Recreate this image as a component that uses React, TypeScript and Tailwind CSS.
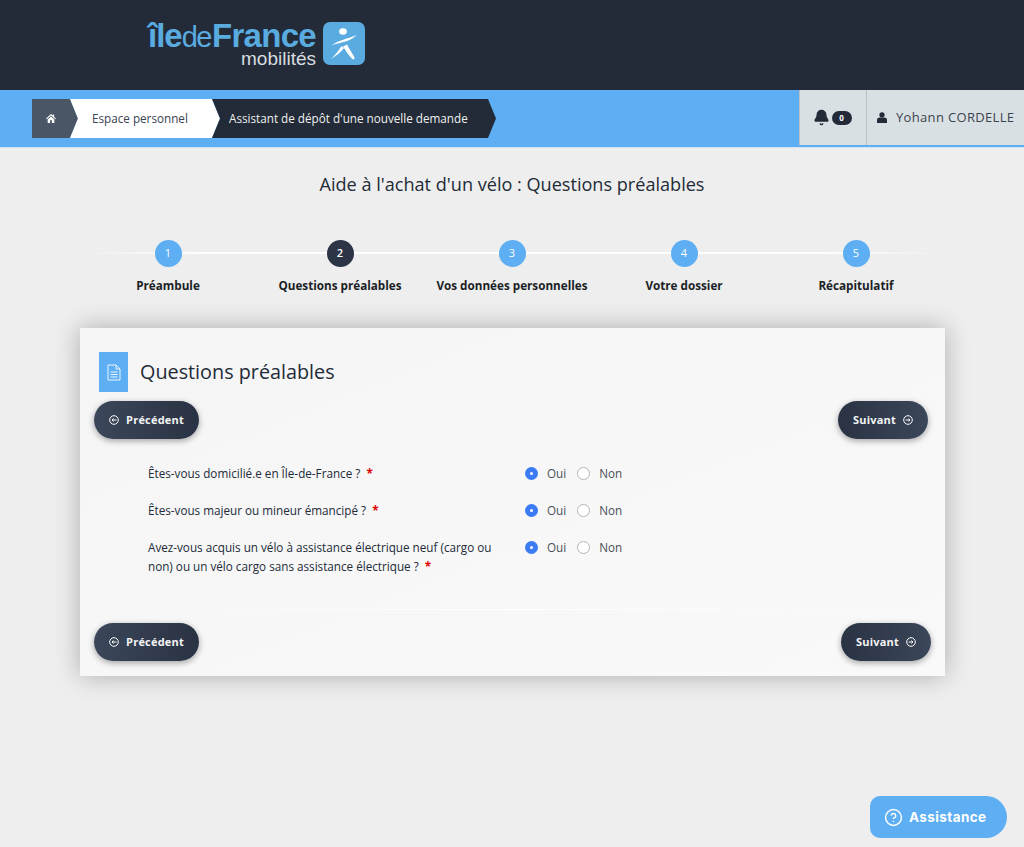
import { Bell, CircleHelp } from 'lucide-react';

const steps = [
  { n: 1, label: 'Préambule' },
  { n: 2, label: 'Questions préalables', active: true },
  { n: 3, label: 'Vos données personnelles' },
  { n: 4, label: 'Votre dossier' },
  { n: 5, label: 'Récapitulatif' },
];

const questions = [
  { text: 'Êtes-vous domicilié.e en Île-de-France ?', h: 'h-[37px]' },
  { text: 'Êtes-vous majeur ou mineur émancipé ?', h: 'h-[37px]' },
  {
    text: 'Avez-vous acquis un vélo à assistance électrique neuf (cargo ou non) ou un vélo cargo sans assistance électrique ?',
    h: 'h-[62px]',
  },
];

function Logo() {
  return (
    <div className="flex items-start gap-[7px]">
      <div className="flex flex-col items-end w-[169px] -mt-[2px]">
        <div className="flex items-baseline h-[33px] leading-[33px] text-[#5aabe0] font-['Liberation_Sans',sans-serif]">
          <span className="text-[33px] font-bold tracking-[-1px]">île</span>
          <span className="text-[29px] tracking-[-1.5px] mr-[1px]">de</span>
          <span className="text-[33px] font-bold tracking-[-0.7px]">France</span>
        </div>
        <div className="text-[19px] leading-[19px] -mt-[3px] text-[#d9dde0] font-['Liberation_Sans',sans-serif]">
          mobilités
        </div>
      </div>
      <svg width="42" height="43" viewBox="0 0 42 43" className="mt-[1px]">
        <rect width="42" height="43" rx="7" fill="#5aabe0" />
        <ellipse cx="20" cy="9.500" rx="3.800" ry="3.300" fill="#fff" />
        <path d="M9 23.500C14 18 24 17.500 33.500 13C28 18.500 21 20 17 21C14 21.500 11 22.500 9 23.500Z" fill="#fff" />
        <path d="M18.500 24C16 28.500 12 33 8 37C13 34 18 30 21 26Z" fill="#fff" />
        <path d="M20 24.500C23 29 26 34 30 37.500C31 37.500 32 36.500 31.500 35.500C29 31 26 26 24 22.500Z" fill="#fff" />
      </svg>
    </div>
  );
}

function CircleArrow({ dir }: { dir: 'left' | 'right' }) {
  return (
    <svg width="10" height="10" viewBox="0 0 10 10" fill="none" stroke="#fff" strokeWidth="1">
      <circle cx="5" cy="5" r="4.300" />
      {dir === 'left' ? (
        <path d="M7.500 5H3.200M4.600 3.500 3 5l1.600 1.500" />
      ) : (
        <path d="M2.500 5h4.300M5.400 3.500 7 5 5.400 6.500" />
      )}
    </svg>
  );
}

function NavButton({ dir }: { dir: 'left' | 'right' }) {
  const prev = dir === 'left';
  return (
    <button
      className={`flex items-center justify-center gap-[7px] h-[38px] rounded-[19px] text-[#f4f4f4] text-[11px] font-bold tracking-[0.2px] shadow-[0_2px_6px_rgba(0,0,0,0.35)] ${
        prev
          ? 'w-[105px] bg-gradient-to-r from-[#3b465a] to-[#2a3343]'
          : 'w-[90px] bg-gradient-to-r from-[#2a3343] to-[#3b465a]'
      }`}
    >
      {prev && <CircleArrow dir="left" />}
      {prev ? 'Précédent' : 'Suivant'}
      {!prev && <CircleArrow dir="right" />}
    </button>
  );
}

function Radio({ checked, label }: { checked?: boolean; label: string }) {
  return (
    <div className="flex items-center gap-[9px]">
      {checked ? (
        <span className="flex items-center justify-center w-[13px] h-[13px] rounded-full bg-[#3b7cf5]">
          <span className="w-[3px] h-[3px] rounded-full bg-white" />
        </span>
      ) : (
        <span className="w-[13px] h-[13px] rounded-full border border-[#b5b5b5] bg-white" />
      )}
      <span className="text-[11.7px] text-[#4a4f57]">{label}</span>
    </div>
  );
}

export default function App() {
  return (
    <div className="relative h-[847px] overflow-hidden bg-[#eeeeee] font-['Open_Sans',sans-serif]">
      <header className="h-[90px] bg-[#222b37] pl-[147px] pt-[21px]">
        <Logo />
      </header>

      <div className="flex justify-between h-[58px] bg-[#5daef2] border-b border-[#cfe3f5] pl-[32px]">
        <nav className="flex items-center h-[39px] mt-[9px] text-[11.7px]">
          <div className="flex items-center w-[46px] h-full pl-[14px] bg-[#4a5666] text-white [clip-path:polygon(0_0,38px_0,100%_50%,38px_100%,0_100%)]">
            <svg width="10" height="9" viewBox="0 0 11 10" fill="#fff">
              <path d="M5.500 0 0 5l.7.7L5.500 1.600l4.800 4.100.7-.7-2-1.800V.6H8v1.200Z" />
              <path d="M1.800 6 5.500 2.800 9.200 6v4H6.500V7h-2v3H1.800Z" />
            </svg>
          </div>
          <div className="flex items-center h-full w-[150px] -ml-[8px] pl-[22px] bg-white text-[#3a4350] [clip-path:polygon(0_0,142px_0,100%_50%,142px_100%,0_100%,8px_50%)]">
            Espace personnel
          </div>
          <div className="flex items-center h-full w-[284px] -ml-[8px] pl-[17px] bg-[#222b37] text-[#f0f0f0] [clip-path:polygon(0_0,276px_0,100%_50%,276px_100%,0_100%,8px_50%)]">
            Assistant de dépôt d'une nouvelle demande
          </div>
        </nav>
        <div className="flex h-[55px] bg-[#d9e0e3] text-[#3a4350]">
          <div className="flex items-center justify-center gap-[2px] w-[68px] pr-[2px] border-x border-[#b9c1c6]">
            <Bell size={17} fill="#222b37" stroke="#222b37" />
            <span className="flex items-center justify-center w-[20px] h-[14px] rounded-full bg-[#222b37] text-white text-[8px] font-bold">
              0
            </span>
          </div>
          <div className="flex items-center gap-[9px] w-[157px] pl-[10px] text-[13px] tracking-[0.33px]">
            <svg width="10" height="11" viewBox="0 0 11 12" fill="#222b37">
              <circle cx="5.500" cy="3" r="2.900" />
              <path d="M0 12V8.500C0 7 1.500 6 3 6h5c1.500 0 3 1 3 2.500V12Z" />
            </svg>
            Yohann CORDELLE
          </div>
        </div>
      </div>

      <h1 className="mt-[24px] text-center text-[18.1px] leading-[24px] text-[#222b37]">
        Aide à l'achat d'un vélo : Questions préalables
      </h1>

      <div className="relative grid grid-cols-5 w-[860px] ml-[82px] mt-[44px]">
        <div className="absolute left-0 right-0 top-[12px] h-[2px] bg-[linear-gradient(90deg,transparent,#fff_15%,#fff_85%,transparent)]" />
        {steps.map((s) => (
          <div key={s.n} className="relative flex flex-col items-center">
            <span
              className={`flex items-center justify-center w-[27px] h-[27px] rounded-full text-white text-[11px] ${
                s.active ? 'bg-[#2b3545] font-semibold' : 'bg-[#5daef2]'
              }`}
            >
              {s.n}
            </span>
            <span className="mt-[11px] text-[11.7px] leading-[15px] font-bold text-[#1b1f26] whitespace-nowrap">
              {s.label}
            </span>
          </div>
        ))}
      </div>

      <section className="w-[865px] h-[348px] ml-[80px] mt-[35px] bg-gradient-to-br from-[#f5f5f5] to-[#f9f9f9] shadow-[0_0_24px_rgba(0,0,0,0.28)] px-[14px]">
        <div className="flex items-center pt-[24px] pl-[5px]">
          <div className="flex items-center justify-center w-[29px] h-[40px] bg-[#5daef2]">
            <svg width="14" height="17" viewBox="0 0 14 17" fill="none" stroke="#eaf5ff" strokeWidth="1">
              <path d="M1 1h8l4 4v11H1Z" />
              <path d="M9 1v4h4M3.500 8h7M3.500 10.500h7M3.500 13h7" />
            </svg>
          </div>
          <h2 className="ml-[12px] text-[19.800px] leading-[28px] text-[#222b37]">Questions préalables</h2>
        </div>

        <div className="flex justify-between mt-[9px] pr-[3px]">
          <NavButton dir="left" />
          <NavButton dir="right" />
        </div>

        <div className="mt-[25px] pl-[54px]">
          {questions.map((q) => (
            <div key={q.text} className={`flex ${q.h}`}>
              <p className="w-[377px] pr-[20px] text-[11.7px] leading-[19px] text-[#222b37]">
                {q.text} <span className="text-[#e00000] font-bold ml-[3px]">*</span>
              </p>
              <div className="flex items-center gap-[11px] h-[20px]">
                <Radio checked label="Oui" />
                <Radio label="Non" />
              </div>
            </div>
          ))}
        </div>

        <div className="h-px mt-[9px] bg-gradient-to-r from-transparent via-white to-transparent" />

        <div className="flex justify-between mt-[13px]">
          <NavButton dir="left" />
          <NavButton dir="right" />
        </div>
      </section>

      <div className="absolute left-[870px] top-[796px] flex items-center gap-[6px] w-[137px] h-[42px] pl-[14px] pt-[1px] rounded-r-[21px] rounded-l-[10px] bg-[#5daef2] text-white text-[13.500px] font-bold tracking-[0.4px] font-['Inter',sans-serif]">
        <CircleHelp size={19} strokeWidth={1.8} />
        Assistance
      </div>
    </div>
  );
}
